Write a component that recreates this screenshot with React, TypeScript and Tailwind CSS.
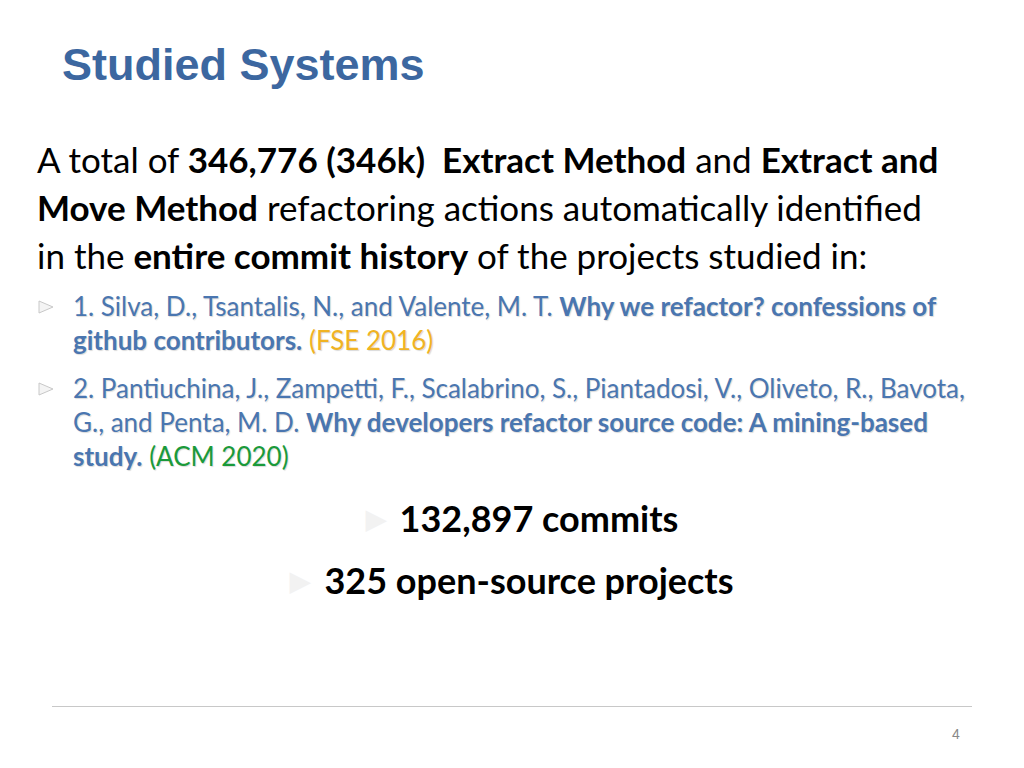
export default function App() {
  const tri = (c: string) => (
    <svg width="18" height="16" viewBox="0 0 18 16" className="shrink-0 mt-[10px]">
      <polygon points="2,2 16,8 2,14" fill={c} stroke="#c8c8c8" strokeWidth="1" />
    </svg>
  );
  return (
    <div className="w-[1024px] h-[768px] bg-white relative overflow-hidden" style={{ fontFamily: "Lato, 'Open Sans', sans-serif" }}>
      <div className="pl-[62px] pt-[39px] text-[45px] font-bold text-[#3c67a0] leading-[52px]" style={{ fontFamily: "'Liberation Sans', Arial, sans-serif" }}>
        Studied Systems
      </div>
      <div className="pl-[37px] mt-[44px] text-[35px] leading-[48px] text-black whitespace-nowrap">
        A total of <b>346,776 (346k)&nbsp; Extract Method</b> and <b>Extract and</b><br />
        <b>Move Method</b> refactoring actions automatically identified<br />
        in the <b>entire commit history</b> of the projects studied in:
      </div>
      <div className="pl-[37px] mt-[10px] text-[26px] leading-[34px] text-[#4a76b0] whitespace-nowrap" style={{ textShadow: "1px 1px 1px rgba(0,0,0,0.15)" }}>
        <div className="flex gap-[18px]">
          {tri("#f4f4f4")}
          <div>1. Silva, D., Tsantalis, N., and Valente, M. T. <b>Why we refactor? confessions of</b><br /><b>github contributors.</b> <span className="text-[#f0b323]">(FSE 2016)</span></div>
        </div>
        <div className="flex gap-[18px] mt-[14px]">
          {tri("#f4f4f4")}
          <div>2. Pantiuchina, J., Zampetti, F., Scalabrino, S., Piantadosi, V., Oliveto, R., Bavota,<br />G., and Penta, M. D. <b>Why developers refactor source code: A mining-based</b><br /><b>study.</b> <span className="text-[#1a9a3a]">(ACM 2020)</span></div>
        </div>
      </div>
      <div className="flex flex-col items-center mt-[14px] text-[36px] font-bold text-black leading-[62px]">
        <div className="flex items-center gap-[14px] ml-[20px]">
          <span className="text-[#f2f2f2] text-[26px]">▶</span>132,897 commits
        </div>
        <div className="flex items-center gap-[14px]">
          <span className="text-[#f2f2f2] text-[26px]">▶</span>325 open-source projects
        </div>
      </div>
      <div className="absolute left-[52px] right-[52px] top-[706px] h-px bg-[#c8c8c8]" />
      <div className="absolute left-[952px] top-[724px] text-[14px] text-[#888]" style={{ fontFamily: "'Liberation Sans', Arial, sans-serif" }}>4</div>
    </div>
  );
}
